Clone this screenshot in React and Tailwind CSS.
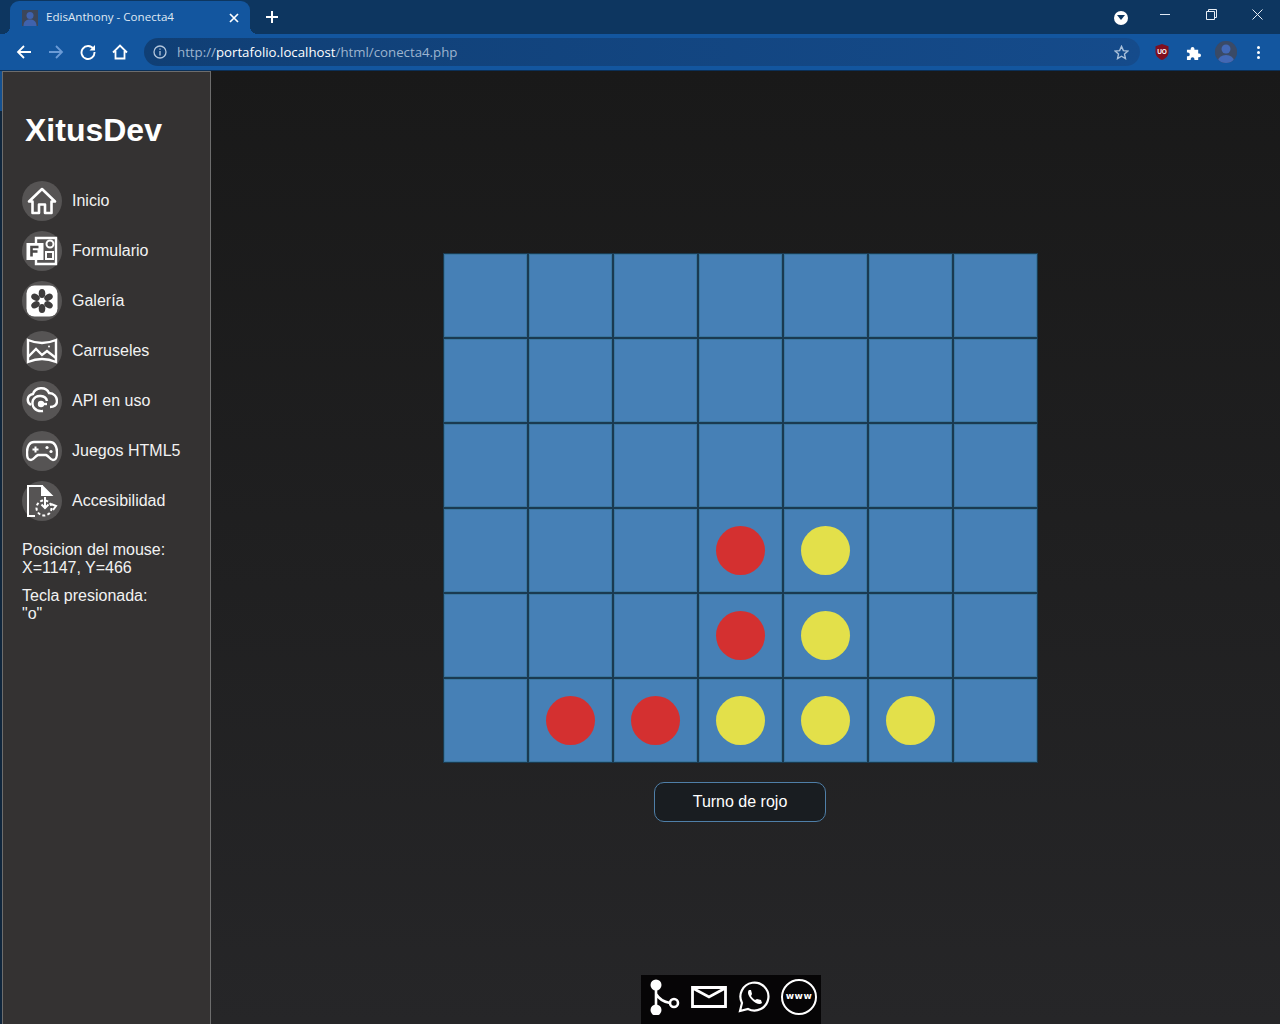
import React from 'react';

const board = [
  '.......',
  '.......',
  '.......',
  '...ry..',
  '...ry..',
  '.rryyy.',
];

function HomeIcon() {
  return (
    <svg viewBox="0 0 30 30" className="w-[30px] h-[30px]" fill="none" stroke="white" strokeWidth="2.600">
      <path d="M2 15.500 15 3l13 12.500h-3.500V27H18v-8.500h-6V27H5.500V15.500z" strokeLinejoin="round" />
    </svg>
  );
}

function FormIcon() {
  return (
    <svg viewBox="0 0 32 32" className="w-[32px] h-[32px]" fill="none" stroke="white" strokeWidth="2">
      <path d="M10 3h20v26H10z" strokeWidth="2.400" />
      <rect x="0.500" y="8" width="17" height="17" fill="white" stroke="none" />
      <path d="M5.500 21.500V12h7M5.500 16.500h6" stroke="#4a4848" strokeWidth="2.600" />
      <circle cx="24" cy="9" r="3.500" />
      <rect x="20" y="17" width="7" height="7" />
    </svg>
  );
}

function GalleryIcon() {
  return (
    <svg viewBox="0 0 32 32" className="w-[32px] h-[32px]">
      <rect x="0.500" y="0.500" width="31" height="31" rx="8" fill="white" />
      <g fill="#3f3d3d">
        <ellipse cx="16" cy="8.500" rx="3.300" ry="4.500" />
        <ellipse cx="16" cy="8.500" rx="3.300" ry="4.500" transform="rotate(60 16 16)" />
        <ellipse cx="16" cy="8.500" rx="3.300" ry="4.500" transform="rotate(120 16 16)" />
        <ellipse cx="16" cy="8.500" rx="3.300" ry="4.500" transform="rotate(180 16 16)" />
        <ellipse cx="16" cy="8.500" rx="3.300" ry="4.500" transform="rotate(240 16 16)" />
        <ellipse cx="16" cy="8.500" rx="3.300" ry="4.500" transform="rotate(300 16 16)" />
      </g>
    </svg>
  );
}

function CarouselIcon() {
  return (
    <svg viewBox="0 0 32 32" className="w-[32px] h-[32px]" fill="none" stroke="white" strokeWidth="2.400">
      <path d="M2 5Q16 11 30 5V27Q16 21 2 27z" />
      <path d="M2 22l8-8 6 6 5-4 9 7" />
      <circle cx="23" cy="11.500" r="1" fill="white" stroke="none" />
    </svg>
  );
}

function ApiIcon() {
  return (
    <svg viewBox="0 0 32 32" className="w-[32px] h-[32px]" fill="none" stroke="white" strokeWidth="2.400">
      <path d="M5 20C0 17 1 10 7 9c2-7 13-8 16-1 5 0 8 4 8 8 0 4-3 6-7 6" />
      <path d="M21 16c-1-6-11-7-14-1-2 6 2 12 10 11" />
      <circle cx="15" cy="19" r="3.200" fill="white" stroke="none" />
      <path d="M15 19h6" />
    </svg>
  );
}

function GameIcon() {
  return (
    <svg viewBox="0 0 32 32" className="w-[32px] h-[32px]" fill="none" stroke="white" strokeWidth="2.400">
      <path d="M8 7h16c4 0 7 4 7 10s-1 8-4 8-4-4-7-5h-8c-3 1-4 5-7 5s-4-2-4-8S4 7 8 7z" />
      <path d="M6.500 14.500h6M9.500 11.500v6" strokeWidth="2" />
      <circle cx="21" cy="12.500" r="1.600" fill="white" stroke="none" />
      <circle cx="25" cy="16.500" r="1.600" fill="white" stroke="none" />
    </svg>
  );
}

function AccessIcon() {
  return (
    <svg viewBox="0 0 32 32" className="w-[32px] h-[32px]" fill="none" stroke="white" strokeWidth="2">
      <path d="M9 31H2V1h14v9h9" />
      <path d="M16 1l9 9h-9z" fill="white" />
      <circle cx="18" cy="23" r="7.500" strokeDasharray="3 2.200" />
      <path d="M19 12v11M15.500 19.500 19 23l3.500-3.500" />
      <path d="M25 19l5 2-3 4" />
    </svg>
  );
}

const menu = [
  ['Inicio', HomeIcon],
  ['Formulario', FormIcon],
  ['Galería', GalleryIcon],
  ['Carruseles', CarouselIcon],
  ['API en uso', ApiIcon],
  ['Juegos HTML5', GameIcon],
  ['Accesibilidad', AccessIcon],
];

function TabStrip() {
  return (
    <div className="h-[34px] flex items-end bg-[#0d3660] pl-[10px]">
      <div className="relative w-[240px] h-[33px] rounded-t-[9px] bg-[#13569f] flex items-center pl-[12px] pr-[8px]">
        <div className="absolute left-[-8px] bottom-0 w-2 h-2 bg-[radial-gradient(circle_at_0_0,transparent_8px,#13569f_8px)]" />
        <div className="absolute right-[-8px] bottom-0 w-2 h-2 bg-[radial-gradient(circle_at_100%_0,transparent_8px,#13569f_8px)]" />
        <svg viewBox="0 0 16 16" className="w-4 h-4 shrink-0">
          <rect width="16" height="16" fill="#3c4658" />
          <circle cx="8" cy="5.500" r="3.500" fill="#3f62ad" />
          <path d="M1.500 16c0-5 3-6.500 6.500-6.500s6.500 1.500 6.500 6.500z" fill="#3f62ad" />
        </svg>
        <span className="ml-2 pb-px text-[11.6px] text-[#dfe8f3] flex-1 truncate">EdisAnthony - Conecta4</span>
        <svg viewBox="0 0 10 10" className="w-[10px] h-[10px] mr-[3px]" stroke="white" strokeWidth="1.700">
          <path d="M1 1l8 8M9 1l-8 8" />
        </svg>
      </div>
      <svg viewBox="0 0 12 12" className="w-[12px] h-[12px] ml-[16px] mb-[11px]" stroke="white" strokeWidth="2">
        <path d="M6 0v12M0 6h12" />
      </svg>
      <div className="flex-1" />
      <div className="self-stretch flex items-center">
        <div className="w-[14px] h-[14px] rounded-full bg-white flex items-center justify-center mr-[14px] mt-[1px]">
          <div className="w-0 h-0 border-l-[4px] border-r-[4px] border-t-[5px] border-l-transparent border-r-transparent border-t-[#0d3660]" />
        </div>
        <div className="w-[46px] flex justify-center mb-[6px]">
          <div className="w-[10px] h-px bg-[#dfe8f3]" />
        </div>
        <div className="w-[46px] flex justify-center mb-[6px]">
          <svg viewBox="0 0 11 11" className="w-[11px] h-[11px]" fill="none" stroke="#e8eef5">
            <path d="M.5 2.500h8v8h-8zM2.500 2.500v-2h8v8h-2" />
          </svg>
        </div>
        <div className="w-[46px] flex justify-center mb-[6px]">
          <svg viewBox="0 0 11 11" className="w-[11px] h-[11px]" stroke="#e8eef5">
            <path d="M.5.500l10 10M10.500.500l-10 10" />
          </svg>
        </div>
      </div>
    </div>
  );
}

function Toolbar() {
  return (
    <div className="h-[36px] bg-[#13569f] flex items-center pl-[16px]">
      <svg viewBox="0 0 16 16" className="w-4 h-4" fill="none" stroke="white" strokeWidth="1.800">
        <path d="M15 8H2M8 2 2 8l6 6" />
      </svg>
      <svg viewBox="0 0 16 16" className="w-4 h-4 ml-4" fill="none" stroke="#6b9bd6" strokeWidth="1.800">
        <path d="M1 8h13M8 2l6 6-6 6" />
      </svg>
      <svg viewBox="0 0 16 16" className="w-4 h-4 ml-4" fill="none" stroke="white" strokeWidth="1.900">
        <path d="M13.500 5A6.500 6.500 0 1 0 14.500 8" />
        <path d="M15 1v5.500H9.500z" fill="white" stroke="none" />
      </svg>
      <svg viewBox="0 0 16 16" className="w-4 h-4 ml-4" fill="none" stroke="white" strokeWidth="1.800">
        <path d="M1 8.500 8 1.500l7 7M3.500 7v7.500h9V7" />
      </svg>
      <div className="w-[996px] h-[28px] ml-[16px] rounded-full bg-gradient-to-r from-[#103f75] to-[#154b8b] flex items-center pl-[9px] pr-[8px]">
        <svg viewBox="0 0 14 14" className="w-[14px] h-[14px]" fill="none" stroke="#b3c6dc" strokeWidth="1.300">
          <circle cx="7" cy="7" r="6" />
          <path d="M7 6v4.500M7 3.500v1.300" />
        </svg>
        <div className="ml-[10px] pt-px text-[13.25px] text-[#9db4cf] flex-1">
          http://<span className="text-white">portafolio.localhost</span>/html/conecta4.php
        </div>
        <svg viewBox="0 0 16 16" className="w-[15px] h-[15px] mr-[3px]" fill="none" stroke="#a9c0da" strokeWidth="1.500">
          <path d="M8 1.500 10 6l4.800.500-3.600 3.200 1 4.800L8 12l-4.200 2.500 1-4.800L1.200 6.500 6 6z" />
        </svg>
      </div>
      <svg viewBox="0 0 14 16" className="w-[14px] h-4 ml-[15px]">
        <path d="M7 0l6.500 2.200V8c0 4-3 6.500-6.500 8C3.500 14.500.5 12 .5 8V2.200z" fill="#800f1f" />
        <text x="7" y="10" textAnchor="middle" fontSize="6.500" fontWeight="700" fill="white" fontFamily="Liberation Sans, sans-serif">UO</text>
      </svg>
      <svg viewBox="0 0 16 16" className="w-[15px] h-[15px] ml-[17px]" fill="white">
        <path d="M1 5h4V4a2 2 0 0 1 4 0v1h4v4h1a2 2 0 0 1 0 4h-1v3H9v-1a2 2 0 0 0-4 0v1H1v-4h1a2 2 0 0 0 0-4H1z" />
      </svg>
      <div className="w-[22px] h-[22px] rounded-full bg-[#314d78] ml-[14px] overflow-hidden">
        <svg viewBox="0 0 22 22" className="w-full h-full">
          <rect width="22" height="22" fill="#3a4a66" />
          <circle cx="11" cy="8" r="4.500" fill="#4268b5" />
          <ellipse cx="11" cy="20" rx="8" ry="6" fill="#4268b5" />
        </svg>
      </div>
      <div className="flex flex-col gap-[2px] ml-[20px]">
        <div className="w-[3px] h-[3px] rounded-full bg-white" />
        <div className="w-[3px] h-[3px] rounded-full bg-white" />
        <div className="w-[3px] h-[3px] rounded-full bg-white" />
      </div>
    </div>
  );
}

function Sidebar() {
  return (
    <aside className="w-[209px] shrink-0 bg-[#343232] border-x border-t border-[#6d6d6d] pl-[19px] text-white">
      <h1 className="mt-[38px] ml-[3px] text-[32px] leading-[40px] font-bold">XitusDev</h1>
      <nav className="mt-[31px] flex flex-col gap-[10px]">
        {menu.map(([label, Icon]) => (
          <div key={label} className="h-10 flex items-center gap-[10px] text-[16px] text-[#f2f2f2]">
            <div className="w-10 h-10 rounded-full bg-[#565454] flex items-center justify-center">
              <Icon />
            </div>
            {label}
          </div>
        ))}
      </nav>
      <div className="mt-[20px] text-[16px] leading-[18px] text-[#f2f2f2]">
        <p>Posicion del mouse:<br />X=1147, Y=466</p>
        <p className="mt-[2px] pt-[8px]">Tecla presionada:<br />"o"</p>
      </div>
    </aside>
  );
}

function Cell({ value }) {
  return (
    <div className="w-[85px] h-[85px] border border-[#1a3a50]">
      <div className="w-full h-full bg-[#4680b6] border border-[#3a769f] flex items-center justify-center">
        {value === 'r' && <div className="w-[49px] h-[49px] rounded-full bg-[#d43030]" />}
        {value === 'y' && <div className="w-[49px] h-[49px] rounded-full bg-[#e3e04a]" />}
      </div>
    </div>
  );
}

function Footer() {
  return (
    <div className="w-[180px] h-[49px] bg-[#060506] flex items-center pl-[8px] pb-[5px] mr-[18px]">
      <svg viewBox="0 0 32 36" className="w-[32px] h-[36px]" fill="none" stroke="white" strokeWidth="2.600">
        <circle cx="7" cy="6" r="5.500" fill="white" stroke="none" />
        <circle cx="7" cy="31" r="5.500" fill="white" stroke="none" />
        <path d="M7 6v25M7 15c3 5 8 8 14 9" />
        <circle cx="25" cy="24" r="4" />
      </svg>
      <svg viewBox="0 0 36 22" className="w-[36px] h-[22px] ml-[10px]" fill="none" stroke="white" strokeWidth="2.800">
        <path d="M1.500 1.500h33v19h-33zM1.500 2 18 11 34.500 2" />
      </svg>
      <svg viewBox="0 0 32 32" className="w-[32px] h-[32px] ml-[11px]" fill="none" stroke="white" strokeWidth="2.200">
        <path d="M2 30l2-8A14 14 0 1 1 10 28z" />
        <path d="M11 9c-2 2-1 6 3 10s8 5 10 3l-1-3-4-1-2 1c-2-1-3-3-4-4l1-2-1-4z" fill="white" stroke="none" />
      </svg>
      <div className="w-[36px] h-[36px] ml-[11px] rounded-full border-[2.500px] border-white flex items-center justify-center text-white text-[9px] font-bold tracking-[0.6px] font-['DejaVu_Sans',sans-serif]">
        www
      </div>
    </div>
  );
}

export default function App() {
  return (
    <div className="w-[1280px] h-[1024px] overflow-hidden flex flex-col bg-[#0d3660] font-['Liberation_Sans',Arial,sans-serif]">
      <div className="shrink-0 font-['Open_Sans','Liberation_Sans',sans-serif]">
        <TabStrip />
        <Toolbar />
        <div className="h-px bg-[#0b3058]" />
      </div>
      <div className="flex-1 flex min-h-0">
        <div className="w-[2px] shrink-0 bg-[linear-gradient(to_bottom,#14508f_40px,#10263c_40px)]" />
        <Sidebar />
        <main className="flex-1 flex flex-col items-center bg-gradient-to-b from-[#191919] to-[#262628] pr-[11px]">
          <div className="mt-[182px] grid grid-cols-7">
            {board.flatMap((row, r) =>
              row.split('').map((value, c) => <Cell key={r + '-' + c} value={value} />)
            )}
          </div>
          <div className="mt-[19px] w-[172px] h-10 rounded-[10px] border border-[#4f7fa8] bg-[#191d21] flex items-center justify-center text-white text-[16px]">
            Turno de rojo
          </div>
          <div className="mt-auto">
            <Footer />
          </div>
        </main>
      </div>
    </div>
  );
}
